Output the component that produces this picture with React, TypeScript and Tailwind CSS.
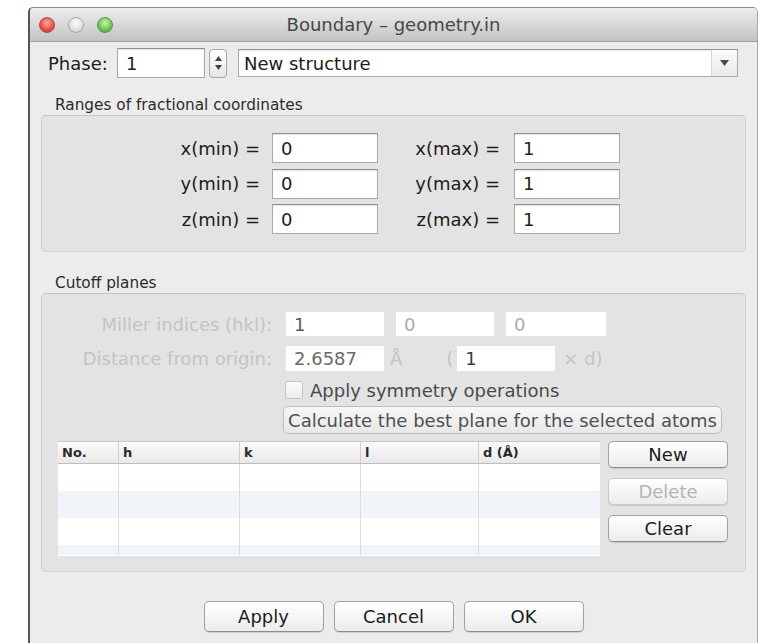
import React from 'react';

const font = "font-['DejaVu_Sans',sans-serif]";

function TextBox({ value, w, h = 30, dim = false, tone = 'text-[#1c1c1c]' }: { value: string; w: number; h?: number; dim?: boolean; tone?: string }) {
  return (
    <div
      className={`flex items-center bg-white pl-[8px] text-[18px] ${tone} ${
        dim ? 'border border-[#e2e2e2]' : 'border border-[#a9a9a9] border-t-[#8f8f8f] shadow-[inset_0_1px_1px_rgba(0,0,0,0.12)]'
      }`}
      style={{ width: w, height: h }}
    >
      {value}
    </div>
  );
}

function PushButton({ label, w, h = 27, disabled = false }: { label: string; w: number; h?: number; disabled?: boolean }) {
  return (
    <div
      className={`flex items-center justify-center rounded-[5px] border bg-gradient-to-b from-[#ffffff] to-[#ececec] shadow-[0_1px_1px_rgba(0,0,0,0.12)] text-[18px] ${
        disabled ? 'border-[#c9c9c9] text-[#b4b4b4]' : 'border-[#a2a2a2] border-b-[#8c8c8c] text-[#1c1c1c]'
      }`}
      style={{ width: w, height: h }}
    >
      {label}
    </div>
  );
}

function RangeRow({ axis }: { axis: string }) {
  return (
    <div className="flex h-[30px] items-center text-[18px] text-[#1c1c1c]">
      <div className="w-[218px] text-right">{axis}(min) =</div>
      <div className="ml-[12px]">
        <TextBox value="0" w={106} />
      </div>
      <div className="w-[122px] text-right">{axis}(max) =</div>
      <div className="ml-[14px]">
        <TextBox value="1" w={106} />
      </div>
    </div>
  );
}

const columns = [
  { name: 'No.', w: 60 },
  { name: 'h', w: 121 },
  { name: 'k', w: 121 },
  { name: 'l', w: 118 },
  { name: 'd (Å)', w: 120 },
];

function PlanesTable() {
  return (
    <div className="w-[542px] h-[115px] overflow-hidden border-t border-[#c8c8c8] bg-white">
      <div className="flex h-[22px] border-b border-[#bdbdbd] bg-gradient-to-b from-[#fafafa] to-[#e9e9e9] text-[13px] font-bold text-[#2a2a2a]">
        {columns.map((c, i) => (
          <div
            key={c.name}
            className={`flex items-center pl-[4px] ${i > 0 ? 'border-l border-[#cfcfcf]' : ''}`}
            style={{ width: c.w }}
          >
            {c.name}
          </div>
        ))}
      </div>
      <div className="h-[91px] overflow-hidden">
        {[0, 1, 2, 3].map((r) => (
          <div key={r} className={`flex h-[27px] ${r % 2 === 1 ? 'bg-[#f1f4f9]' : 'bg-white'}`}>
            {columns.map((c, i) => (
              <div key={c.name} className={i > 0 ? 'border-l border-[#dcdcdc]' : ''} style={{ width: c.w }} />
            ))}
          </div>
        ))}
      </div>
    </div>
  );
}

export default function App() {
  return (
    <div className={`w-[766px] h-[643px] overflow-hidden bg-white pl-[28px] pt-[7px] ${font}`}>
      <div className="flex h-[640px] w-[730px] flex-col rounded-t-[5px] border-l-2 border-r border-t border-b border-l-[#4d5761] border-r-[#a8a8a8] border-t-[#8c8c8c] border-b-[#6f6f6f] bg-[#ececec]">
        {/* title bar */}
        <div className="grid h-[34px] grid-cols-[1fr_auto_1fr] items-center rounded-t-[4px] border-b border-[#a0a0a0] bg-gradient-to-b from-[#eeeeee] to-[#c3c3c3]">
          <div className="flex items-center gap-[13px] pl-[9px]">
            <div className="h-[16px] w-[16px] rounded-full border border-[#b2463f] bg-[radial-gradient(circle_at_50%_35%,#ffa59c,#e0483f_65%,#c13a32)]" />
            <div className="h-[16px] w-[16px] rounded-full border border-[#a9a9a9] bg-[radial-gradient(circle_at_50%_35%,#ffffff,#dadada_65%,#c4c4c4)]" />
            <div className="h-[16px] w-[16px] rounded-full border border-[#4f9a41] bg-[radial-gradient(circle_at_50%_35%,#c9f5b8,#62c04f_65%,#47a03a)]" />
          </div>
          <div className="text-[18px] text-[#474747]">Boundary – geometry.in</div>
          <div />
        </div>

        <div className="flex flex-col px-[11px]">
          {/* phase row */}
          <div className="mt-[6px] flex items-center pl-[7px]">
            <div className="w-[69px] text-[18px] text-[#1c1c1c]">Phase:</div>
            <TextBox value="1" w={88} />
            <div className="ml-[4px] flex h-[29px] w-[18px] flex-col items-center justify-center gap-[4px] rounded-[4px] border border-[#a5a5a5] bg-gradient-to-b from-[#ffffff] to-[#e6e6e6]">
              <svg width="7" height="5" viewBox="0 0 7 5"><path d="M3.5 0L7 5H0z" fill="#444" /></svg>
              <svg width="7" height="5" viewBox="0 0 7 5"><path d="M0 0h7L3.5 5z" fill="#444" /></svg>
            </div>
            <div className="ml-[11px] flex h-[28px] w-[500px] items-center border border-[#a9a9a9] border-t-[#939393] bg-white shadow-[inset_0_1px_1px_rgba(0,0,0,0.1)]">
              <div className="flex-1 pl-[5px] text-[18px] text-[#1c1c1c]">New structure</div>
              <div className="flex h-full w-[26px] items-center justify-center border-l border-[#d4d4d4] bg-gradient-to-b from-[#fbfbfb] to-[#e9e9e9]">
                <svg width="9" height="6" viewBox="0 0 9 6"><path d="M0 0h9L4.5 6z" fill="#4a4a4a" /></svg>
              </div>
            </div>
          </div>

          {/* fractional ranges */}
          <div className="mt-[18px] h-[18px] pl-[14px] text-[15.3px] leading-[18px] text-[#2b2b2b]">Ranges of fractional coordinates</div>
          <div className="mt-[1px] flex h-[137px] flex-col gap-[5.5px] rounded-[5px] border border-[#d0d0d0] border-t-[#c4c4c4] bg-[#e3e3e3] pt-[17px]">
            <RangeRow axis="x" />
            <RangeRow axis="y" />
            <RangeRow axis="z" />
          </div>

          {/* cutoff planes */}
          <div className="mt-[22px] h-[18px] pl-[14px] text-[15.3px] leading-[18px] text-[#2b2b2b]">Cutoff planes</div>
          <div className="mt-[1px] flex h-[279px] flex-col rounded-[5px] border border-[#d0d0d0] border-t-[#c4c4c4] bg-[#e3e3e3] pt-[17px]">
            <div className="flex h-[26px] items-center text-[18px]">
              <div className="w-[230px] text-right text-[#c4c4c4]">Miller indices (hkl):</div>
              <div className="ml-[13px] flex gap-[10px]">
                <TextBox value="1" w={100} h={26} dim tone="text-[#5a5a5a]" />
                <TextBox value="0" w={100} h={26} dim tone="text-[#ababab]" />
                <TextBox value="0" w={102} h={26} dim tone="text-[#ababab]" />
              </div>
            </div>
            <div className="mt-[8px] flex h-[27px] items-center text-[18px]">
              <div className="w-[230px] text-right text-[#c4c4c4]">Distance from origin:</div>
              <div className="ml-[13px]">
                <TextBox value="2.6587" w={100} h={27} dim tone="text-[#6a6a6a]" />
              </div>
              <div className="ml-[5px] text-[#c4c4c4]">Å</div>
              <div className="ml-[44px] text-[#c4c4c4]">(</div>
              <div className="ml-[3px]">
                <TextBox value="1" w={100} h={27} dim tone="text-[#3c3c3c]" />
              </div>
              <div className="ml-[7px] text-[#c4c4c4]">× d)</div>
            </div>
            <div className="mt-[9px] flex h-[18px] items-center pl-[243px]">
              <div className="h-[18px] w-[18px] rounded-[3px] border border-[#c2c2c2] bg-gradient-to-b from-[#fbfbfb] to-[#ececec]" />
              <div className="ml-[7px] text-[18px] text-[#4a4a4a]">Apply symmetry operations</div>
            </div>
            <div className="mt-[7px] pl-[241px]">
              <div className="flex h-[28px] w-[439px] items-center justify-center rounded-[5px] border border-[#bdbdbd] bg-gradient-to-b from-[#f7f7f7] to-[#e8e8e8] text-[18px] text-[#505050]">
                Calculate the best plane for the selected atoms
              </div>
            </div>
            <div className="mt-[7px] flex pl-[16px]">
              <PlanesTable />
              <div className="ml-[8px] flex flex-col gap-[10px]">
                <PushButton label="New" w={120} />
                <PushButton label="Delete" w={120} disabled />
                <PushButton label="Clear" w={120} />
              </div>
            </div>
          </div>

          {/* dialog buttons */}
          <div className="mt-[29px] flex justify-center gap-[10px]">
            <PushButton label="Apply" w={120} h={31} />
            <PushButton label="Cancel" w={120} h={31} />
            <PushButton label="OK" w={120} h={31} />
          </div>
        </div>
      </div>
    </div>
  );
}
